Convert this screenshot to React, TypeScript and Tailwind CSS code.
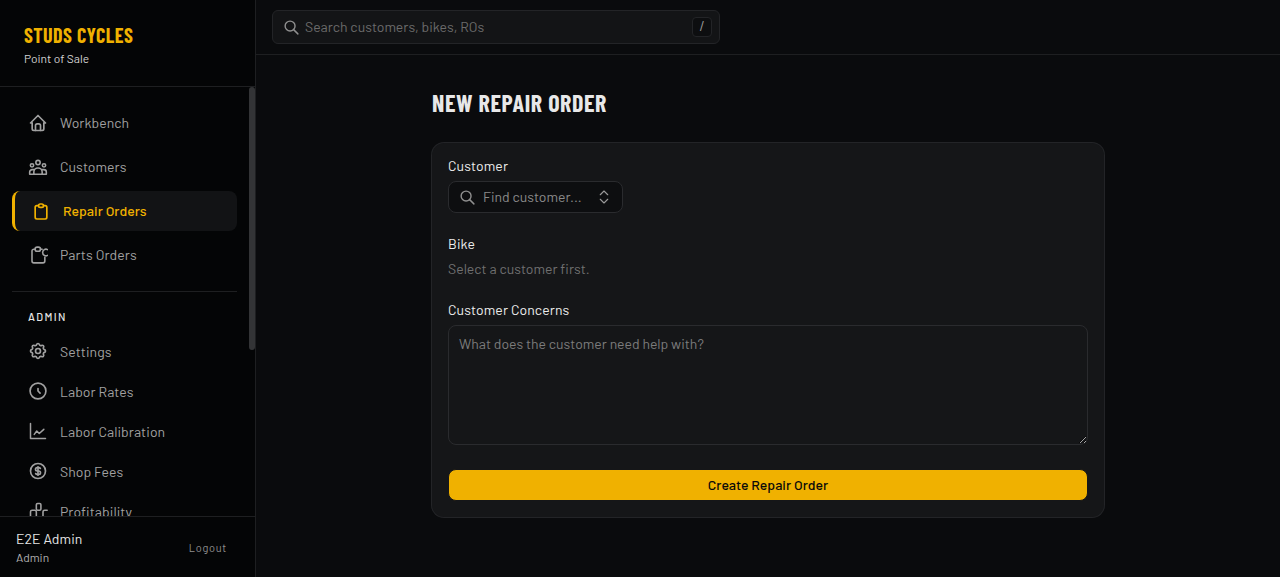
import { ChevronsUpDown } from "lucide-react";
import { TbHome, TbClipboard, TbSettings, TbCoin, TbSearch } from "react-icons/tb";
import type { ReactNode } from "react";

const BODY = "font-['Barlow','Roboto','Liberation_Sans',sans-serif]";
const HEAD = "font-['Barlow_Condensed','Liberation_Sans_Narrow','Roboto_Condensed',sans-serif]";

function UsersIcon() {
  return (
    <svg width="21" height="21" viewBox="0 0 24 24" fill="none" stroke="currentColor" strokeWidth="1.9" strokeLinecap="round" strokeLinejoin="round">
      <circle cx="12" cy="6" r="2.6" />
      <circle cx="4.8" cy="9.4" r="2" />
      <circle cx="19.2" cy="9.4" r="2" />
      <path d="M7 20v-2.5a5 5 0 0 1 10 0V20" />
      <path d="M7 20H2v-2.5a3 3 0 0 1 3-3h2" />
      <path d="M17 20h5v-2.5a3 3 0 0 0-3-3h-2" />
      <path d="M7 20h10" />
    </svg>
  );
}

function PartsIcon() {
  return (
    <svg width="20" height="20" viewBox="0 0 24 24" fill="none" stroke="currentColor" strokeWidth="1.9" strokeLinecap="round" strokeLinejoin="round">
      <path d="M8.5 5H7a2.2 2.2 0 0 0-2.2 2.2v12A2.2 2.2 0 0 0 7 21.4h11a2.2 2.2 0 0 0 2.2-2.2v-4.5" />
      <path d="M8.5 5A2.5 2.5 0 0 1 11 2.5h1.5A2.5 2.5 0 0 1 15 5a2.5 2.5 0 0 1-2.5 2.5H11A2.5 2.5 0 0 1 8.5 5z" />
      <path d="M15 5h2" />
      <path d="M23.5 5.5a4 4 0 1 0 0 7" />
    </svg>
  );
}

function ClockIcon() {
  return (
    <svg width="20" height="20" viewBox="0 0 24 24" fill="none" stroke="currentColor" strokeWidth="2" strokeLinecap="round" strokeLinejoin="round">
      <circle cx="12" cy="12" r="9.5" />
      <path d="M12 9v3l2.5 2.5" />
    </svg>
  );
}

function ChartIcon() {
  return (
    <svg width="20" height="20" viewBox="0 0 24 24" fill="none" stroke="currentColor" strokeWidth="1.8" strokeLinecap="round" strokeLinejoin="round">
      <path d="M3 3v18h18" />
      <path d="M7.5 16l3-4 3 3 5.5-5" />
    </svg>
  );
}

function ProfitIcon() {
  return (
    <svg width="20" height="20" viewBox="0 0 24 24" fill="none" stroke="currentColor" strokeWidth="1.9" strokeLinecap="round" strokeLinejoin="round">
      <rect x="3" y="11" width="7" height="10" rx="2" />
      <rect x="10" y="3" width="5.5" height="8" rx="1.5" />
      <path d="M18 21v-8a2 2 0 0 1 2-2h3" />
    </svg>
  );
}

function NavItem({ icon, label, active, lift }: { icon: ReactNode; label: string; active?: boolean; lift?: boolean }) {
  if (active) {
    return (
      <div className="flex h-10 items-center gap-3 rounded-lg border-l-[3px] border-[#f0b100] bg-[#121315] pl-4 text-[14px] font-medium text-[#f0b100]">
        <span className="flex w-5 justify-center">{icon}</span>
        <span className="mb-[2px]">{label}</span>
      </div>
    );
  }
  return (
    <div className="flex h-10 items-center gap-3 pl-4 text-[14px] tracking-[0.06px] text-[#a1a1a1]">
      <span className="flex w-5 justify-center">{icon}</span>
      <span className={lift ? "mb-[2px]" : ""}>{label}</span>
    </div>
  );
}

export default function App() {
  return (
    <div className={`flex h-[577px] overflow-hidden bg-[#0a0b0d] ${BODY}`}>
      <aside className="flex w-[256px] flex-shrink-0 flex-col border-r border-[#1e1f21] bg-[#040506]">
        <div className="h-[87px] flex-shrink-0 border-b border-[#1e1f21] pt-[21px] pl-6">
          <div className={`text-[20px] leading-7 font-bold tracking-[0.5px] text-[#f0b100] ${HEAD}`}>STUDS CYCLES</div>
          <div className="mt-[1px] text-[12px] leading-4 text-[#d4d4d4]">Point of Sale</div>
        </div>
        <div className="relative flex-1 overflow-hidden">
          <div className="absolute top-0 right-0 h-[263px] w-[6px] rounded-full bg-[#333436]" />
          <nav className="px-3 pt-4 pr-[18px]">
            <div className="flex flex-col gap-1">
              <NavItem icon={<TbHome size={20} />} label="Workbench" lift />
              <NavItem icon={<UsersIcon />} label="Customers" lift />
              <NavItem icon={<TbClipboard size={21} />} label="Repair Orders" active />
              <NavItem icon={<PartsIcon />} label="Parts Orders" lift />
            </div>
            <div className="mt-4 border-t border-[#1e1f21] pt-[17px]">
              <div className="pl-4 text-[11px] leading-4 font-medium tracking-[1.4px] text-[#e5e5e5]">ADMIN</div>
              <div className="mt-[6px] flex flex-col">
                <NavItem icon={<TbSettings size={20} />} label="Settings" />
                <NavItem icon={<ClockIcon />} label="Labor Rates" />
                <NavItem icon={<ChartIcon />} label="Labor Calibration" />
                <NavItem icon={<TbCoin size={20} />} label="Shop Fees" />
                <NavItem icon={<ProfitIcon />} label="Profitability" />
              </div>
            </div>
          </nav>
        </div>
        <div className="flex h-[61px] flex-shrink-0 items-center justify-between border-t border-[#1e1f21] pr-7 pl-4">
          <div className="mb-[1px]">
            <div className="text-[14px] leading-5 tracking-[0.05px] text-[#e5e5e5]">E2E Admin</div>
            <div className="text-[12px] leading-4 text-[#b0b0b0]">Admin</div>
          </div>
          <div className="mt-[2px] text-[11px] tracking-[0.7px] text-[#8f8f8f]">Logout</div>
        </div>
      </aside>

      <div className="flex min-w-0 flex-1 flex-col">
        <header className="flex h-[55px] flex-shrink-0 items-center border-b border-[#1e1f21] pl-4">
          <div className="flex h-[34px] w-[448px] items-center rounded-md border border-[#232427] bg-[#131416] pr-[7px] pl-[10px]">
            <TbSearch size={17} className="text-[#8f8f8f]" />
            <span className="mb-[2px] ml-[5px] flex-1 text-[14px] text-[#6b6b6b]">Search customers, bikes, ROs</span>
            <span className="flex h-5 w-5 items-center justify-center rounded border border-[#232427] bg-[#0d0e10] text-[13px] text-[#9a9a9a]">/</span>
          </div>
        </header>
        <main className="flex-1 overflow-hidden">
          <div className="mx-auto w-[672px] pt-[34px]">
            <h1 className={`text-[24px] leading-7 font-bold tracking-[0.6px] text-[#e8e8e8] ${HEAD}`}>NEW REPAIR ORDER</h1>
            <div className="mt-[26px] rounded-xl bg-[#151618] p-4 ring-1 ring-[#232427]">
              <div className="text-[14px] leading-[14px] tracking-[0.1px] text-[#ededed]">Customer</div>
              <div className="mt-2 flex h-8 w-[175px] items-center rounded-lg border border-[#2a2b2e] bg-[#0d0e10] pr-[9px] pl-[10px]">
                <TbSearch size={17} className="text-[#8f8f8f]" />
                <span className="mb-[2px] ml-[7px] flex-1 text-[14px] text-[#8a8a8a]">Find customer...</span>
                <ChevronsUpDown size={18} strokeWidth={1.5} className="text-[#9a9a9a]" />
              </div>
              <div className="mt-6 text-[14px] leading-[14px] tracking-[0.1px] text-[#ededed]">Bike</div>
              <div className="mt-2 text-[14px] leading-5 text-[#707070]">Select a customer first.</div>
              <div className="mt-6 text-[14px] leading-[14px] tracking-[0.1px] text-[#ededed]">Customer Concerns</div>
              <textarea
                readOnly
                placeholder="What does the customer need help with?"
                className="mt-2 block h-[120px] w-full rounded-lg border border-[#2a2b2e] bg-transparent px-[10px] py-[8px] text-[14px] leading-5 outline-none placeholder:text-[#7c7c7c]"
              />
              <button className="mt-6 flex h-8 w-full items-center justify-center rounded-lg border border-[#151618] bg-[#f0b100] pb-[1px] text-[14px] font-medium text-[#0a0a0a]">
                Create Repair Order
              </button>
            </div>
          </div>
        </main>
      </div>
    </div>
  );
}
